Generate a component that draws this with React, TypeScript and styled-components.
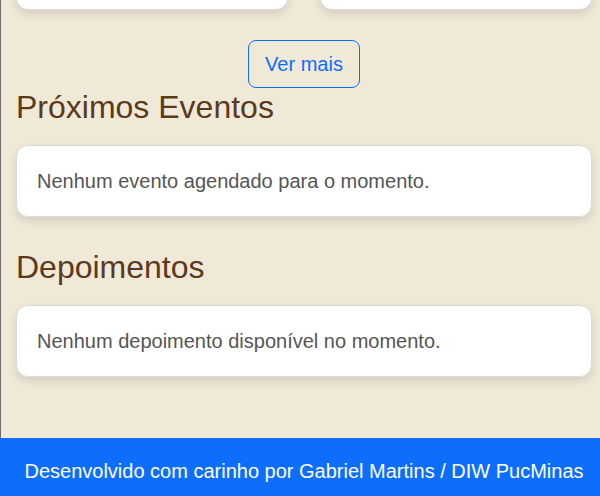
import React from "react";
import styled, { createGlobalStyle } from "styled-components";

const Global = createGlobalStyle`
  html, body { margin: 0; padding: 0; }
  body {
    background: #f0e9d8;
    font-family: "Liberation Sans", Arial, sans-serif;
    overflow: hidden;
  }
`;

const Page = styled.div`
  min-height: 504px;
  display: flex;
  flex-direction: column;
`;

const Main = styled.main`
  flex: 1;
  border-left: 1px solid #6e6e6e;
  padding: 0 8px 0 15px;
  display: flex;
  flex-direction: column;
`;

const CardGrid = styled.div`
  display: grid;
  grid-template-columns: 1fr 1fr;
  gap: 32px;
  margin-top: -30px;
`;

const Card = styled.div<{ $h?: number }>`
  background: #fff;
  border: 1px solid #dcdcdc;
  border-radius: 12px;
  box-shadow: 0 4px 10px rgba(0, 0, 0, 0.12);
  height: ${(p) => (p.$h ? `${p.$h}px` : "auto")};
  box-sizing: border-box;
`;

const ButtonRow = styled.div`
  display: flex;
  justify-content: center;
  margin-top: 30px;
`;

const OutlineButton = styled.button`
  font-family: "Liberation Sans", Arial, sans-serif;
  font-size: 20px;
  line-height: 30px;
  color: #0d6efd;
  background: transparent;
  border: 1px solid #0d6efd;
  border-radius: 8px;
  padding: 8px 16px;
  cursor: pointer;
`;

const SectionTitle = styled.h2`
  font-family: "Liberation Sans", Arial, sans-serif;
  font-weight: 400;
  font-size: 32px;
  line-height: 38px;
  color: #5b3a1c;
  margin: 0 0 19px;
`;

const InfoCard = styled(Card)`
  padding: 20px;
  margin-bottom: 31px;
`;

const InfoText = styled.p`
  margin: 0;
  font-size: 20px;
  line-height: 30px;
  color: #555;
`;

const Footer = styled.footer`
  background: #0d6efd;
  color: #fff;
  text-align: center;
  padding: 18px 0 18px 8px;
  font-size: 20px;
  line-height: 30px;
`;

export default function App() {
  return (
    <>
      <Global />
      <Page>
        <Main>
          <CardGrid>
            <Card $h={40} />
            <Card $h={40} />
          </CardGrid>
          <ButtonRow>
            <OutlineButton>Ver mais</OutlineButton>
          </ButtonRow>
          <SectionTitle>Próximos Eventos</SectionTitle>
          <InfoCard>
            <InfoText>Nenhum evento agendado para o momento.</InfoText>
          </InfoCard>
          <SectionTitle>Depoimentos</SectionTitle>
          <InfoCard>
            <InfoText>Nenhum depoimento disponível no momento.</InfoText>
          </InfoCard>
        </Main>
        <Footer>Desenvolvido com carinho por Gabriel Martins / DIW PucMinas</Footer>
      </Page>
    </>
  );
}
